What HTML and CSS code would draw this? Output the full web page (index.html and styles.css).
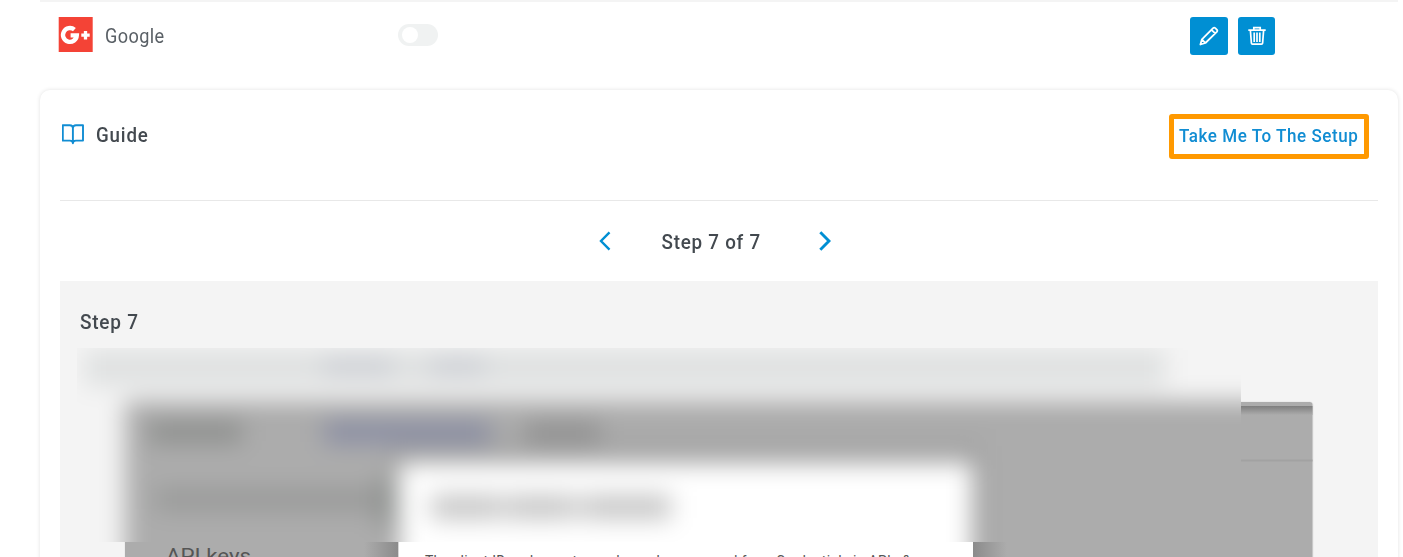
FILE: index.html
```html
<!DOCTYPE html>
<html lang="en">
<head>
<meta charset="utf-8">
<title>Social login</title>
<link rel="stylesheet" href="styles.css">
</head>
<body>
<main class="page">
  <section class="provider">
    <svg class="provider-logo" width="35" height="35" viewBox="0 0 35 35" aria-hidden="true">
      <path fill="#f44336" d="M.7 0H34.700v35H.7z"/>
      <path d="M16.400 12.700A6.900 6.900 0 1 0 18.800 18.400H12.600" fill="none" stroke="#fff" stroke-width="4.400"/>
      <path d="M23.300 18.200h8.400M27.500 14v8.400" fill="none" stroke="#fff" stroke-width="3.300"/>
    </svg>
    <span class="provider-name">Google</span>
    <span class="toggle"></span>
    <div class="actions">
      <button class="action action-edit" aria-label="Edit">
        <svg width="20" height="20" viewBox="0 0 20 20" fill="none" stroke="#fff" stroke-width="1.8" stroke-linejoin="round"><path d="M1.400 18.500l1.500-5.200L14.100 2.100q1.100-1 2.200 0l1.500 1.500q1 1.100 0 2.200L6.400 17zM2.900 13.300L6.400 17M12.500 3.800l3.700 3.600"/></svg>
      </button>
      <button class="action action-delete" aria-label="Delete">
        <svg width="18" height="20" viewBox="0 0 18 20" fill="none" stroke="#fff" stroke-width="1.7"><path d="M.3 4.200h17.400M5.800 4V1.600h6.400V4M2.400 4.500l1 12.700q.1 1 1.100 1h9q1 0 1.100-1l1-12.700M6.200 6.500v9.500M9 6.500v9.500M11.800 6.500v9.500"/></svg>
      </button>
    </div>
  </section>

  <section class="card">
    <header class="card-head">
      <svg class="book" width="23" height="21" viewBox="0 0 23 21" fill="none" stroke="#118dd3" stroke-width="1.9" stroke-linejoin="round"><path d="M.8 1.200h7q3.100 0 3.100 2.800 0-2.800 3.100-2.800H21v15.400h-7.100q-3 0-3 2.600 0-2.600-3-2.600H.8zM10.900 4v15"/></svg>
      <h2 class="title">Guide</h2>
      <a class="setup"><span class="setup-text">Take Me To The Setup</span></a>
    </header>
    <nav class="pager">
      <svg width="12" height="20" viewBox="0 0 12 20" fill="none" stroke="#008fd3" stroke-width="2.4"><path d="M10.500 1.300L2 10l8.500 8.700"/></svg>
      <span class="pager-text">Step 7 of 7</span>
      <svg width="12" height="20" viewBox="0 0 12 20" fill="none" stroke="#008fd3" stroke-width="2.9"><path d="M1.300 1.300L10 10l-8.700 8.700"/></svg>
    </nav>
    <div class="step">
      <h3 class="step-title">Step 7</h3>
      <svg class="shot" width="1318" height="214" viewBox="60 343 1318 214">
        <defs>
          <filter id="soft" filterUnits="userSpaceOnUse" x="0" y="300" width="1403" height="340" color-interpolation-filters="sRGB"><feGaussianBlur stdDeviation="12"/></filter>
          <clipPath id="area"><path d="M77 348H1241V542H77z"/></clipPath>
          <linearGradient id="down" x2="0" y2="1"><stop stop-color="#7e7e7e"/><stop offset="1" stop-color="#acacac"/></linearGradient>
          <linearGradient id="left"><stop stop-color="#acacac"/><stop offset="1" stop-color="#8b8b8b"/></linearGradient>
          <linearGradient id="right"><stop stop-color="#8b8b8b"/><stop offset="1" stop-color="#acacac"/></linearGradient>
        </defs>
        <rect x="124.500" y="401.500" width="1189" height="240" rx="4" fill="#e5e5e5"/>
        <rect x="125" y="402" width="1187.500" height="240" rx="3" fill="#acacac"/>
        <path fill="url(#down)" d="M1241 406h71.500v9h-71.500z"/>
        <path fill="#a2a2a2" d="M1241 459.500h71.500v2h-71.500z"/>
        <path fill="url(#left)" d="M364 540h34v17h-34z"/>
        <path fill="url(#right)" d="M973 540h34v17h-34z"/>
        <path fill="#fff" d="M398.500 540H973v17H398.500z"/>
        <g clip-path="url(#area)">
          <path fill="#f4f4f4" d="M77 348H1241V542H77z"/>
          <g filter="url(#soft)">
            <path fill="#f4f4f4" d="M-40 300H1400V640H-40z"/>
            <path fill="#dfe1e1" d="M84 350H1166V386H84z"/>
            <path fill="#c8cbd2" d="M323 359h70v14h-70zM430 359h55v14h-55z"/>
            <path fill="#acacac" d="M125 402H1300V640H125z"/>
            <path fill="#9c9c9c" d="M125 405H1300V411H125z"/>
            <path fill="#9c9c9c" d="M391 446h590v16H391z"/>
            <path fill="#939393" d="M391 462h7v180h-7zM973 462h8v180h-8z"/>
            <path fill="#8a8c8a" d="M149 423h93v19h-93z"/>
            <path fill="#888ca3" d="M324 422h166v21H324z"/>
            <path fill="#8c8c8c" d="M525 424h75v17h-75z"/>
            <path fill="#989998" d="M155 489h229v21H155z"/>
            <path fill="#8d908e" d="M378 478h20v48h-20z"/>
            <path fill="#fff" d="M398 462H973V640H398z"/>
            <path fill="#c4c4c4" d="M431 495h67v24h-67zM510 495h60v24h-60zM587 495h84v24h-84z"/>
            <path fill="#d6d6d6" d="M498 495h12v24h-12zM570 495h17v24h-17z"/>
          </g>
        </g>
        <text x="166" y="563" textLength="85" lengthAdjust="spacingAndGlyphs" class="shot-label">API keys</text>
        <text x="425" y="565.500" textLength="486" class="shot-text">The client ID and secret can always be accessed from Credentials in APIs &amp;</text>
      </svg>
    </div>
  </section>
</main>
</body>
</html>
```
FILE: styles.css
```css
* { box-sizing: border-box; }
body { margin: 0; background: #fff; color: #43494f; font-family: Roboto, sans-serif; overflow: hidden; }
.page { height: 557px; padding: 0 5px 0 40px; overflow: hidden; }
.provider { height: 90px; border-top: 2px solid #f4f4f4; padding: 15px 123px 0 18px; display: flex; align-items: flex-start; }
.provider-logo { display: block; }
.provider-name { width: 293px; margin-left: 12px; padding-top: 8px; font-size: 19.500px; line-height: 24px; font-weight: 400; letter-spacing: .4px; color: #5a6066; transform: scaleX(.93); transform-origin: left; }
.toggle { width: 40px; height: 22px; margin-top: 7px; border-radius: 11px; background: #f0f2f2; padding: 3px 4px; }
.toggle::before { content: ""; display: block; width: 16px; height: 16px; border-radius: 50%; background: #fff; }
.actions { margin-left: auto; display: flex; gap: 10px; }
.action { height: 38px; border: 0; padding: 0; border-radius: 3px; background: #008fd3; display: flex; align-items: center; justify-content: center; }
.action-edit { width: 38px; }
.action-delete { width: 37px; }
.card { height: 500px; border-radius: 10px; background: #fff; box-shadow: 0 0 4px rgba(0, 0, 0, .12); padding: 0 20px; }
.card-head { height: 111px; padding: 24px 9.500px 0 2px; border-bottom: 1px solid #e8e8e8; display: flex; align-items: flex-start; }
.book { margin-top: 10px; }
.title { margin: 9px 0 0 11px; font-size: 20px; line-height: 24px; font-weight: 500; letter-spacing: .9px; transform: scaleX(.935); transform-origin: left; }
.setup { margin-left: auto; width: 200px; height: 45px; border: 5px solid #ff9900; border-radius: 3px; color: #118dd3; font-size: 18.500px; line-height: 34px; font-weight: 500; letter-spacing: .6px; white-space: nowrap; padding-left: 5px; }
.setup-text { display: inline-block; transform: scaleX(.92); transform-origin: left; }
.pager { height: 80px; padding-right: 9px; display: flex; justify-content: center; align-items: center; }
.pager-text { width: 208px; padding-right: 8px; text-align: center; font-size: 20px; font-weight: 500; line-height: 24px; letter-spacing: .8px; padding-top: 1px; transform: scaleX(.94); }
.step { background: #f4f4f4; height: 300px; padding-top: 29px; }
.step-title { margin: 0 0 9px 20px; font-size: 20px; line-height: 24px; font-weight: 500; letter-spacing: .8px; transform: scaleX(.95); transform-origin: left; }
.shot { display: block; }
.shot-label { font-size: 20px; fill: #555; }
.shot-text { font-size: 14px; fill: #555; }
```
